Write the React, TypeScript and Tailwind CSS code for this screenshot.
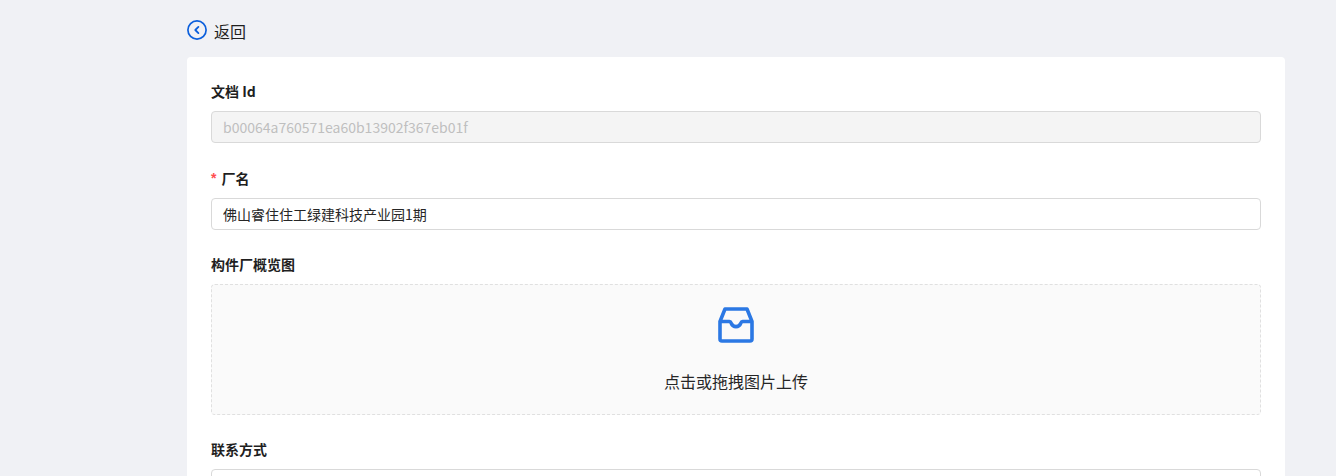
function Label({ text, required }: { text: string; required?: boolean }) {
  return (
    <div className="h-[22px] mb-[9px] flex items-center text-sm leading-[22px] font-semibold text-[#1f1f1f]">
      {required && <span className="text-[#ff4d4f] mr-[5px] font-bold font-['Liberation_Sans']">*</span>}
      <span>{text}</span>
    </div>
  );
}

export default function App() {
  return (
    <div
      className="h-screen overflow-hidden bg-[#f0f1f5] pl-[187px] pr-[51px]"
      style={{ fontFamily: '"Noto Sans CJK SC", "Noto Sans", sans-serif' }}
    >
      {/* Back link */}
      <div className="h-[57px] pt-5 flex items-start">
        <svg width="20" height="20" viewBox="0 0 20 20" fill="none" className="shrink-0">
          <circle cx="10" cy="10" r="9.1" stroke="#0b5fdc" strokeWidth="1.7" />
          <path d="M11.4 6.9 8.3 10l3.1 3.1" stroke="#0b5fdc" strokeWidth="1.8" strokeLinecap="round" strokeLinejoin="round" />
        </svg>
        <span className="ml-[7px] text-base leading-[22px] text-[#1f1f1f]">返回</span>
      </div>

      {/* Form card */}
      <div className="bg-white rounded-[4px] px-6 pt-[23px] pb-6">
        <div className="mb-6">
          <Label text="文档 Id" />
          <input
            disabled
            value="b00064a760571ea60b13902f367eb01f"
            className="block w-full h-8 px-[11px] pb-[1px] text-sm bg-[#f4f4f4] border border-[#d9d9d9] rounded-[4px] text-[#bfbfbf]"
            readOnly
          />
        </div>

        <div className="mb-[23px]">
          <Label text="厂名" required />
          <input
            value="佛山睿住住工绿建科技产业园1期"
            className="block w-full h-8 px-[11px] pb-[1px] text-sm bg-white border border-[#d9d9d9] rounded-[4px] text-[#262626]"
            readOnly
          />
        </div>

        <div className="mb-[23px]">
          <Label text="构件厂概览图" />
          <div className="h-[131px] bg-[#fafafa] border border-dashed border-[#e0e0e0] rounded-[4px] flex flex-col items-center pt-[22px]">
            <svg width="36" height="36" viewBox="0 0 36 36" fill="none">
              <path
                d="M7 2h22l5 12.500V32a2 2 0 0 1-2 2H4a2 2 0 0 1-2-2V14.500z"
                stroke="#2b78e4"
                strokeWidth="3.600"
                strokeLinejoin="round"
              />
              <path
                d="M2 14.500h9.500c1 0 1.400.7 1.800 1.800.8 2.100 2.600 3.300 4.700 3.300s3.900-1.200 4.700-3.300c.4-1.100.8-1.800 1.800-1.800H34"
                stroke="#2b78e4"
                strokeWidth="3.600"
              />
            </svg>
            <span className="mt-[26px] text-base leading-6 text-[#262626]">点击或拖拽图片上传</span>
          </div>
        </div>

        <div>
          <Label text="联系方式" />
          <input className="block w-full h-8 px-[11px] text-sm bg-white border border-[#d9d9d9] rounded-[4px]" readOnly />
        </div>
      </div>
    </div>
  );
}
